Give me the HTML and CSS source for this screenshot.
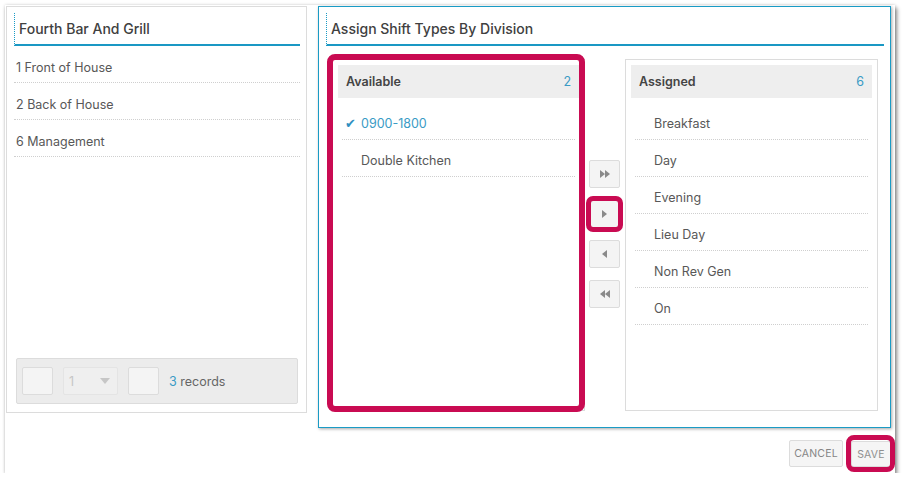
FILE: index.html
```
<!DOCTYPE html>
<html>
<head>
<meta charset="utf-8">
<link rel="stylesheet" href="styles.css">
</head>
<body>
<div class="window">
  <div class="main">
    <section class="panel panel-left">
      <div class="title">Fourth Bar And Grill</div>
      <ul class="divisions">
        <li>1 Front of House</li>
        <li>2 Back of House</li>
        <li>6 Management</li>
      </ul>
      <div class="pager">
        <span class="pg-box"></span>
        <span class="pg-select"><span>1</span><span class="caret"></span></span>
        <span class="pg-box"></span>
        <span class="pg-text"><span class="blue">3</span> records</span>
      </div>
    </section>
    <section class="panel panel-right">
      <div class="title">Assign Shift Types By Division</div>
      <div class="dual">
        <div class="listbox hl-frame">
          <div class="lb-head"><span>Available</span><span class="count">2</span></div>
          <ul class="lb-items">
            <li class="selected"><span class="check">✔</span>0900-1800</li>
            <li>Double Kitchen</li>
          </ul>
        </div>
        <div class="movers">
          <button class="mv"><svg width="10" height="8" viewBox="0 0 10 8"><path d="M0 0L5 4L0 8Z M5 0L10 4L5 8Z" fill="#8a8a8a"/></svg></button>
          <button class="mv hl-btn"><svg width="5" height="8" viewBox="0 0 5 8"><path d="M0 0L5 4L0 8Z" fill="#8a8a8a"/></svg></button>
          <button class="mv"><svg width="5" height="8" viewBox="0 0 5 8"><path d="M5 0L0 4L5 8Z" fill="#8a8a8a"/></svg></button>
          <button class="mv"><svg width="10" height="8" viewBox="0 0 10 8"><path d="M5 0L0 4L5 8Z M10 0L5 4L10 8Z" fill="#8a8a8a"/></svg></button>
        </div>
        <div class="listbox">
          <div class="lb-head"><span>Assigned</span><span class="count">6</span></div>
          <ul class="lb-items">
            <li>Breakfast</li>
            <li>Day</li>
            <li>Evening</li>
            <li>Lieu Day</li>
            <li>Non Rev Gen</li>
            <li>On</li>
          </ul>
        </div>
      </div>
    </section>
  </div>
  <div class="footer">
    <button class="fbtn btn-cancel">CANCEL</button>
    <button class="fbtn hl-save">SAVE</button>
  </div>
</div>
</body>
</html>
```
FILE: styles.css
```
* { box-sizing: border-box; }
html, body { margin: 0; padding: 0; background: #ffffff; }
body {
  font-family: Inter, "Noto Sans", "DejaVu Sans", sans-serif;
  color: #555;
}
ul { list-style: none; margin: 0; padding: 0; }

.window {
  margin: 5px 0 0 5px;
  width: 890px;
  height: 468px;
  background: #fff;
  padding: 1px 4px 0 1px;
  box-shadow: 2px 3px 4px rgba(0,0,0,0.45), 0 0 3px rgba(0,0,0,0.18);
}

.main {
  display: flex;
  align-items: flex-start;
  gap: 11px;
}

.panel {
  background: #fff;
  display: flex;
  flex-direction: column;
  padding: 6px 6px 0 7px;
}

.panel-left {
  width: 301px;
  height: 407px;
  border: 1px solid #dcdcdc;
}

.panel-right {
  width: 573px;
  height: 422px;
  border: 1px solid #1a9bc5;
  box-shadow: 1px 1px 3px rgba(0,0,0,0.35);
}

.title {
  height: 33px;
  line-height: 31px;
  padding-left: 4px;
  border-left: 1px dotted #1a9bc5;
  border-bottom: 2px solid #1a98c4;
  font-size: 14px;
  font-weight: 500;
  color: #404040;
}

.divisions li {
  padding: 14px 0 6px 2px;
  line-height: 16px;
  font-size: 12.5px;
  color: #585858;
  border-bottom: 1px dotted #cfcfcf;
}

.pager {
  margin: auto 2px 8px 2px;
  height: 46px;
  background: #ececec;
  border: 1px solid #dcdcdc;
  border-radius: 2px;
  padding: 0 5px;
  display: flex;
  align-items: center;
  gap: 10px;
}
.pg-box {
  width: 31px;
  height: 28px;
  background: #f4f4f4;
  border: 1px solid #dcdcdc;
  border-radius: 2px;
}
.pg-select {
  width: 55px;
  height: 28px;
  background: #efefef;
  border: 1px solid #e4e4e4;
  border-radius: 2px;
  display: flex;
  align-items: center;
  justify-content: space-between;
  padding: 0 7px 0 5px;
  font-size: 12.5px;
  color: #c6c6c6;
}
.caret {
  width: 0;
  height: 0;
  border-left: 5px solid transparent;
  border-right: 5px solid transparent;
  border-top: 6px solid #c6c6c6;
}
.pg-text {
  font-size: 12.5px;
  color: #666;
}
.blue { color: #3a9bc5; }

.dual {
  display: flex;
  margin: 13px 0 0 6px;
}

.listbox {
  width: 253px;
  height: 352px;
  border: 1px solid #dcdcdc;
  padding: 5px;
  background: #fff;
}

.lb-head {
  height: 33px;
  background: #eeeeee;
  display: flex;
  align-items: center;
  justify-content: space-between;
  padding: 0 8px;
  font-size: 12.5px;
  font-weight: 600;
  color: #444;
}
.count {
  font-weight: 400;
  color: #3a9bc5;
}

.lb-items {
  margin: 5px 4px 0;
}
.lb-items li {
  padding: 13px 0 7px 19px;
  line-height: 16px;
  font-size: 12.5px;
  color: #585858;
  border-bottom: 1px dotted #cfcfcf;
}
.lb-items li.selected { color: #3a9bc5; }
.check {
  display: inline-block;
  width: 16px;
  margin-left: -16px;
  font-family: "DejaVu Sans", sans-serif;
  font-size: 13px;
  color: #2f8fc0;
}

.hl-frame { position: relative; }
.hl-frame::after {
  content: "";
  position: absolute;
  top: -6px;
  left: -6px;
  right: -1px;
  bottom: -2px;
  border: 6px solid #c90b52;
  border-radius: 8px;
  pointer-events: none;
}

.movers {
  width: 31px;
  margin: 0 5px 0 4px;
  padding-top: 101px;
  display: flex;
  flex-direction: column;
  gap: 12px;
}
.mv {
  width: 31px;
  height: 28px;
  padding: 0;
  background: #f4f4f4;
  border: 1px solid #dcdcdc;
  border-radius: 2px;
  display: flex;
  align-items: center;
  justify-content: center;
  position: relative;
}
.hl-btn::after {
  content: "";
  position: absolute;
  top: -5px;
  left: -4px;
  right: -4px;
  bottom: -5px;
  border: 5px solid #c90b52;
  border-radius: 7px;
}

.footer {
  display: flex;
  justify-content: flex-end;
  gap: 8px;
  margin-top: 12px;
}
.fbtn {
  height: 27px;
  padding: 0;
  background: #f5f5f5;
  border: 1px solid #dcdcdc;
  border-radius: 2px;
  font-family: Inter, "Noto Sans", sans-serif;
  font-size: 10.5px;
  color: #858585;
  letter-spacing: 0.2px;
}
.btn-cancel { width: 54px; }
.hl-save {
  position: relative;
  width: 40px;
  margin-top: 1px;
  height: 26px;
  color: #909090;
}
.hl-save::after {
  content: "";
  position: absolute;
  top: -7px;
  left: -6px;
  right: -5px;
  bottom: -6px;
  border: 5px solid #c90b52;
  border-radius: 8px;
}
```
